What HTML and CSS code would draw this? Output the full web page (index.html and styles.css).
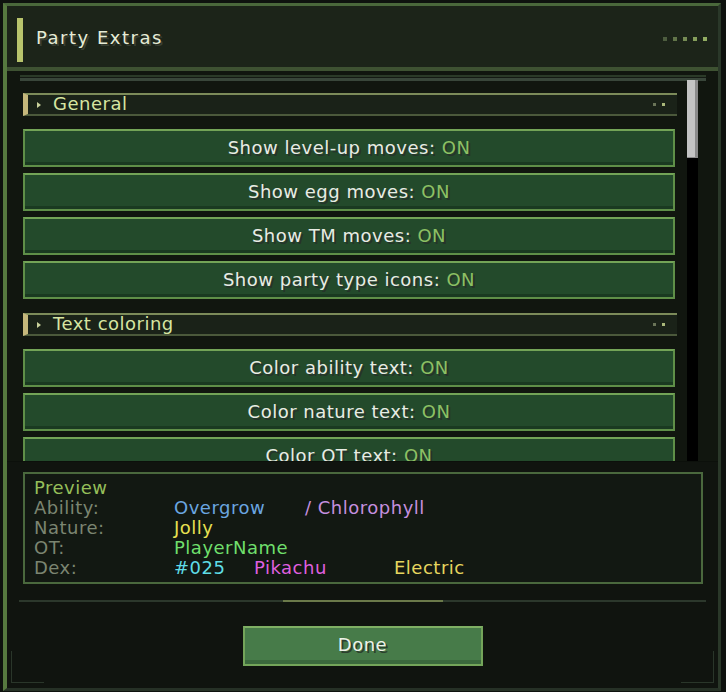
FILE: index.html
```html
<!DOCTYPE html>
<html lang="en">
<head>
    <meta charset="UTF-8">
    <meta name="viewport" content="width=device-width, initial-scale=1.0">
    <title>Party Extras</title>
    <link rel="stylesheet" href="styles.css">
</head>
<body>
    <div class="window">
        <div class="frame">
            <div class="header">
                <div class="accent"></div>
                <h1>Party Extras</h1>
                <div class="dots">
                    <span class="d1"></span><span class="d2"></span><span class="d3"></span><span class="d4"></span><span class="d5"></span>
                </div>
            </div>

            <div class="scroll-area">
                <div class="rule"></div>
                <div class="scroll-row">
                    <div class="list">
                        <div class="section">
                            <span class="arrow"></span>
                            <span class="section-title">General</span>
                            <span class="mini-dots"><i></i><i></i></span>
                        </div>
                        <button class="toggle first">Show level-up moves: <span class="on">ON</span></button>
                        <button class="toggle">Show egg moves: <span class="on">ON</span></button>
                        <button class="toggle">Show TM moves: <span class="on">ON</span></button>
                        <button class="toggle">Show party type icons: <span class="on">ON</span></button>

                        <div class="section">
                            <span class="arrow"></span>
                            <span class="section-title">Text coloring</span>
                            <span class="mini-dots"><i></i><i></i></span>
                        </div>
                        <button class="toggle first">Color ability text: <span class="on">ON</span></button>
                        <button class="toggle">Color nature text: <span class="on">ON</span></button>
                        <button class="toggle">Color OT text: <span class="on">ON</span></button>
                    </div>
                    <div class="scrollbar">
                        <div class="thumb"></div>
                    </div>
                </div>
            </div>

            <div class="bottom">
                <div class="preview">
                    <div class="preview-title">Preview</div>
                    <div class="row"><span class="label">Ability:</span><span class="val ability">Overgrow</span><span class="hidden-ability">/ Chlorophyll</span></div>
                    <div class="row"><span class="label">Nature:</span><span class="nature">Jolly</span></div>
                    <div class="row"><span class="label">OT:</span><span class="ot">PlayerName</span></div>
                    <div class="row"><span class="label">Dex:</span><span class="dex">#025</span><span class="species">Pikachu</span><span class="type">Electric</span></div>
                </div>

                <div class="divider"><span class="lit"></span></div>

                <button class="done">Done</button>

                <div class="corner left"></div>
                <div class="corner right"></div>
            </div>
        </div>
    </div>
</body>
</html>
```

FILE: styles.css
```css
body {
    margin: 0;
    background: #0e120e;
    font-family: "DejaVu Sans", sans-serif;
}

.window {
    width: 726px;
    height: 692px;
    box-sizing: border-box;
    padding: 3px 5px 1px 3px;
}

.frame {
    height: 100%;
    box-sizing: border-box;
    border-top: 3px solid #4a683b;
    border-left: 4px solid #56793f;
    border-right: 3px solid #2a3829;
    border-bottom: 3px solid #263126;
    background: #11160f;
    display: flex;
    flex-direction: column;
}

/* Header */
.header {
    height: 65px;
    box-sizing: border-box;
    background: #1c2419;
    border-bottom: 4px solid #3e5232;
    display: flex;
    align-items: center;
    padding: 7px 11px 0 10px;
}

.accent {
    width: 6px;
    height: 44px;
    background: #b8c46c;
}

h1 {
    margin: 0 0 0 13px;
    font-size: 18px;
    font-weight: normal;
    letter-spacing: 1.5px;
    color: #e6ecd6;
    text-shadow: 2px 2px 0 #383f33;
    flex: 1;
    padding-bottom: 6px;
}

.dots {
    display: flex;
    gap: 6px;
    padding-bottom: 2px;
}

.dots span {
    width: 4px;
    height: 4px;
}

.d1 { background: #4d5d3f; }
.d2 { background: #617449; }
.d3 { background: #758b54; }
.d4 { background: #859e5b; }
.d5 { background: #92ad62; }

/* Scrolling list */
.scroll-area {
    height: 391px;
    display: flex;
    flex-direction: column;
    padding-top: 4px;
    box-sizing: border-box;
    border-bottom: 1px solid #0c100b;
}

.rule {
    height: 2px;
    margin: 0 12px 0 13px;
    background: #2b3a28;
    border-bottom: 1px solid #141a13;
    box-shadow: 0 3px 0 #39463a;
}

.scroll-row {
    flex: 1;
    display: flex;
    min-height: 0;
}

.list {
    width: 656px;
    margin-left: 16px;
    padding-top: 15px;
    overflow: hidden;
}

.section {
    height: 23px;
    box-sizing: border-box;
    background: #1a2218;
    border-top: 2px solid #7c8b59;
    border-bottom: 2px solid #4b593b;
    border-left: 5px solid #c5b77b;
    display: flex;
    align-items: center;
    padding: 0 12px 0 9px;
    color: #d6e5a1;
    font-size: 18px;
    letter-spacing: 0.5px;
}

.arrow {
    width: 0;
    height: 0;
    border-left: 4px solid #c9d19b;
    border-top: 3px solid transparent;
    border-bottom: 3px solid transparent;
    margin-right: 12px;
}

.section-title {
    flex: 1;
    margin-top: -2px;
}

.mini-dots {
    display: flex;
    gap: 6px;
}

.mini-dots i {
    width: 3px;
    height: 3px;
    background: #6a7558;
}

.mini-dots i + i {
    background: #a9b87a;
}

.toggle {
    display: flex;
    align-items: center;
    justify-content: center;
    width: 652px;
    height: 38px;
    margin-top: 6px;
    padding: 0 0 2px;
    box-sizing: border-box;
    border: 2px solid #5f8f48;
    border-top-color: #73a457;
    background: #234a2b;
    box-shadow: inset 0 -3px 0 #1a3a21;
    color: #e8ece4;
    font-family: "DejaVu Sans", sans-serif;
    font-size: 18px;
    letter-spacing: 0.5px;
    text-shadow: 2px 2px 0 #26332a;
    white-space: pre;
}

.toggle.first {
    margin-top: 13px;
}

.on {
    color: #8dc064;
}

.toggle + .section {
    margin-top: 14px;
}

.scrollbar {
    width: 11px;
    margin: 2px 20px 0 10px;
    background: #000;
}

.thumb {
    height: 78px;
    background: #c4c4c4;
    border-right: 3px solid #8b8b8b;
    border-bottom: 1px solid #8b8b8b;
    box-sizing: border-box;
}

/* Bottom part */
.bottom {
    flex: 1;
    position: relative;
    background: #10140f;
    display: flex;
    flex-direction: column;
}

.preview {
    margin: 10px 15px 0 16px;
    height: 112px;
    box-sizing: border-box;
    border: 2px solid #4a683d;
    background: #121812;
    padding: 4px 9px;
    font-size: 18px;
    line-height: 20px;
    letter-spacing: 0.5px;
}

.preview-title {
    color: #95bf5a;
}

.row {
    display: flex;
    white-space: pre;
}

.label {
    width: 140px;
    color: #7b8571;
}

.ability { width: 131px; color: #6aa6e0; }
.hidden-ability { color: #c58fdf; }
.nature { color: #e7e051; }
.ot { color: #6fdf6c; }
.dex { width: 80px; color: #5fdde6; }
.species { width: 140px; color: #df5fdf; }
.type { color: #e6d65f; }

.divider {
    height: 2px;
    margin: 16px 12px 0 12px;
    background: #2c382c;
    display: flex;
}

.divider .lit {
    width: 160px;
    margin-left: 264px;
    background: #6b7a4a;
}

.done {
    align-self: center;
    width: 240px;
    height: 40px;
    margin-top: 24px;
    padding: 0 0 3px;
    box-sizing: border-box;
    border: 2px solid #74a55a;
    border-top-color: #7fb064;
    background: #477b49;
    box-shadow: inset 0 -4px 0 #3b693d;
    color: #eef2ea;
    font-family: "DejaVu Sans", sans-serif;
    font-size: 18px;
    letter-spacing: 0.5px;
    text-shadow: 2px 2px 0 #2c3f2d;
}

.corner {
    position: absolute;
    bottom: 5px;
    width: 32px;
    height: 31px;
    border-bottom: 1px solid #2a362a;
}

.corner.left {
    left: 4px;
    border-left: 1px solid #2a362a;
}

.corner.right {
    right: 4px;
    border-right: 1px solid #2a362a;
}
```
